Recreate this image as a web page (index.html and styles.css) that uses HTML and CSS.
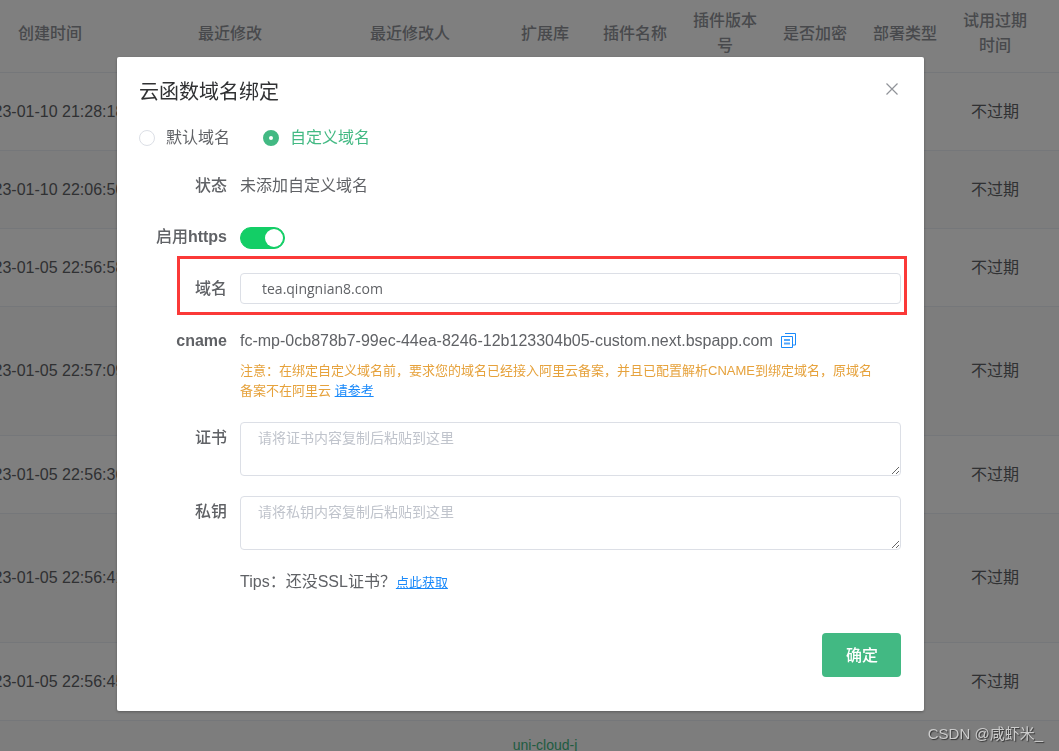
FILE: index.html
```html
<!DOCTYPE html>
<html lang="zh-CN">
<head>
<meta charset="utf-8">
<title>云函数域名绑定</title>
<link rel="stylesheet" href="styles.css">
</head>
<body>
<main class="page">
  <table class="functions">
    <colgroup>
      <col class="col-wide"><col class="col-wide"><col class="col-wide">
      <col class="col-narrow"><col class="col-narrow"><col class="col-narrow">
      <col class="col-narrow"><col class="col-narrow"><col class="col-narrow"><col>
    </colgroup>
    <thead>
      <tr><th>创建时间</th><th>最近修改</th><th>最近修改人</th><th>扩展库</th><th>插件名称</th><th>插件版本号</th><th>是否加密</th><th>部署类型</th><th>试用过期时间</th><th></th></tr>
    </thead>
    <tbody>
      <tr><td>2023-01-10 21:28:18</td><td></td><td></td><td></td><td></td><td></td><td></td><td></td><td>不过期</td><td></td></tr>
      <tr><td>2023-01-10 22:06:50</td><td></td><td></td><td></td><td></td><td></td><td></td><td></td><td>不过期</td><td></td></tr>
      <tr><td>2023-01-05 22:56:58</td><td></td><td></td><td></td><td></td><td></td><td></td><td></td><td>不过期</td><td></td></tr>
      <tr class="tall"><td>2023-01-05 22:57:09</td><td></td><td></td><td></td><td></td><td></td><td></td><td></td><td>不过期</td><td></td></tr>
      <tr><td>2023-01-05 22:56:36</td><td></td><td></td><td></td><td></td><td></td><td></td><td></td><td>不过期</td><td></td></tr>
      <tr class="tall"><td>2023-01-05 22:56:41</td><td></td><td></td><td></td><td></td><td></td><td></td><td></td><td>不过期</td><td></td></tr>
      <tr><td>2023-01-05 22:56:45</td><td></td><td></td><td></td><td></td><td></td><td></td><td></td><td>不过期</td><td></td></tr>
      <tr class="tall"><td></td><td></td><td></td><td class="library"><a href="#">uni-cloud-j</a></td><td></td><td></td><td></td><td></td><td></td><td></td></tr>
    </tbody>
  </table>
</main>

<div class="overlay">
  <form class="dialog" role="dialog" aria-labelledby="dialog-title">
    <header class="dialog-header">
      <h1 class="dialog-title" id="dialog-title">云函数域名绑定</h1>
      <button class="close" type="button" aria-label="关闭">
        <svg width="12" height="12" viewBox="0 0 12 12" fill="none" stroke="currentColor" stroke-width="1.2"><path d="M.5.5l11 11M11.5.5l-11 11"/></svg>
      </button>
    </header>

    <div class="radios">
      <label class="radio"><input type="radio" name="kind">默认域名</label>
      <label class="radio"><input type="radio" name="kind" checked>自定义域名</label>
    </div>

    <div class="row row-status">
      <span class="label">状态</span>
      <span>未添加自定义域名</span>
    </div>

    <div class="row row-https">
      <label class="label" for="https">启用<b>https</b></label>
      <input class="switch" id="https" type="checkbox" role="switch" checked>
    </div>

    <div class="row row-domain">
      <label class="label" for="domain">域名</label>
      <input class="domain" id="domain" type="text" value="tea.qingnian8.com">
    </div>

    <div class="row row-cname">
      <span class="label"><b>cname</b></span>
      <div>
        <div class="cname">
          <span>fc-mp-0cb878b7-99ec-44ea-8246-12b123304b05-custom.next.bspapp.com</span>
          <button class="copy" type="button" aria-label="复制">
            <svg width="15" height="15" viewBox="0 0 15 15" fill="none" stroke="currentColor"><path d="M4 .5h10.500v11.500H12"/><path d="M.5 3.500h11v11h-11z"/><path d="M3 7h6M3 10.500h6" stroke-width="2" opacity=".75"/></svg>
          </button>
        </div>
        <p class="notice">注意：在绑定自定义域名前，要求您的域名已经接入阿里云备案，并且已配置解析CNAME到绑定域名，原域名备案不在阿里云 <a class="link" href="#">请参考</a></p>
      </div>
    </div>

    <div class="row row-cert">
      <label class="label" for="cert">证书</label>
      <textarea class="area" id="cert" placeholder="请将证书内容复制后粘贴到这里"></textarea>
    </div>

    <div class="row row-key">
      <label class="label" for="key">私钥</label>
      <textarea class="area" id="key" placeholder="请将私钥内容复制后粘贴到这里"></textarea>
    </div>

    <div class="row row-tips">
      <span></span>
      <p class="tips">Tips：还没SSL证书？<a class="link" href="#">点此获取</a></p>
    </div>

    <footer class="dialog-footer">
      <button class="confirm" type="submit">确定</button>
    </footer>
  </form>
</div>
<div class="watermark">CSDN @咸虾米_</div>
</body>
</html>
```
FILE: styles.css
```css
* { box-sizing: border-box; }

body {
  margin: 0;
  background: #fff;
  color: #606266;
  font: 16px/24px "Liberation Sans", "Noto Sans CJK SC", sans-serif;
}

input, textarea, button { font: inherit; margin: 0; }
p { margin: 0; }

/* Function list */
.page { height: 100vh; overflow: hidden; }

.functions {
  width: calc(100% + 40px);
  margin-left: -40px;
  table-layout: fixed;
  border-collapse: separate;
  border-spacing: 0;
}
.col-wide { width: 180px; }
.col-narrow { width: 90px; }

.functions th, .functions td {
  padding: 0 10px;
  border-bottom: 1px solid #ebeef5;
  text-align: center;
  white-space: nowrap;
}
.functions th {
  height: 73px;
  padding-bottom: 6px;
  color: #909399;
  font-weight: 500;
  line-height: 25px;
  white-space: normal;
}
.functions td { height: 78px; }
.functions .tall td { height: 129px; }
.functions tbody tr:nth-child(even) { background: #fafafa; }
.functions .library { vertical-align: top; padding: 12px 0; font-size: 14px; }
.library a { color: #42b983; text-decoration: none; }

/* Dialog */
.overlay {
  position: fixed;
  inset: 0;
  padding: 57px 135px 40px 117px;
  background: rgba(0, 0, 0, .5);
}
.dialog {
  padding: 22px 23px 34px 22px;
  border-radius: 2px;
  background: #fff;
  box-shadow: 0 1px 3px rgba(0, 0, 0, .3);
}
.dialog-header { display: flex; justify-content: space-between; align-items: flex-start; }
.dialog-title {
  margin: 0;
  color: #303133;
  font-size: 20px;
  font-weight: 400;
  line-height: 26px;
}
.close, .copy { display: flex; padding: 0; border: 0; background: none; cursor: pointer; }
.close { padding: 4px 3px; color: #909399; }
.copy { color: #1989fa; }

.radios { display: flex; gap: 33px; margin-top: 21px; }
.radio { display: flex; align-items: center; gap: 11px; }
.radio:has(:checked) { color: #42b983; }
.radio input {
  appearance: none;
  width: 16px;
  height: 16px;
  border: 1px solid #dcdfe6;
  border-radius: 50%;
  background: #fff;
}
.radio input:checked { border: 6px solid #42b983; }

.row {
  display: grid;
  grid-template-columns: 88px minmax(0, 1fr);
  column-gap: 13px;
  align-items: start;
}
.label { text-align: right; font-weight: 500; }

.row-status { margin-top: 24px; }
.row-https { margin-top: 27px; }
.row-domain { position: relative; margin-top: 24px; align-items: center; }
.row-cname { margin-top: 25px; }
.row-cert { margin-top: 21px; }
.row-key, .row-tips { margin-top: 20px; }

.switch {
  appearance: none;
  display: flex;
  justify-content: flex-end;
  width: 45px;
  height: 22px;
  margin-top: 2px;
  padding: 1px;
  border: 1px solid #13ce66;
  border-radius: 11px;
  background: #13ce66;
}
.switch::before { content: ""; width: 18px; height: 18px; border-radius: 50%; background: #fff; }

.row-domain::after {
  content: "";
  position: absolute;
  inset: -17px -6px -11px 38px;
  border: 3px solid #fb3938;
  pointer-events: none;
}

.domain, .area {
  width: 100%;
  border: 1px solid #dcdfe6;
  border-radius: 4px;
  background: #fff;
  color: #606266;
}
.domain { height: 31px; padding: 0 21px 1px; font-family: "Open Sans", sans-serif; font-size: 14px; }
.area { display: block; height: 54px; padding: 5px 17px; font-size: 14px; line-height: 20px; resize: vertical; }
.area::placeholder { color: #c0c4cc; }
.row-cert .label, .row-key .label { padding-top: 4px; }

.cname { display: flex; align-items: center; gap: 8px; }
.copy { padding-bottom: 2px; }
.notice { margin-top: 8px; padding-right: 18px; color: #e6a23c; font-size: 13px; line-height: 20px; }
.link { color: #1989fa; font-size: 13px; }

.dialog-footer { display: flex; justify-content: flex-end; margin-top: 38px; }
.confirm {
  height: 44px;
  padding: 1px 23px 0 24px;
  border: 0;
  border-radius: 4px;
  background: #42b983;
  color: #fff;
  font-weight: 500;
}

.watermark {
  position: fixed;
  right: 16px;
  bottom: 5px;
  color: #ccc;
  font-size: 15px;
  text-shadow: 1px 1px 1px #333;
}
```
